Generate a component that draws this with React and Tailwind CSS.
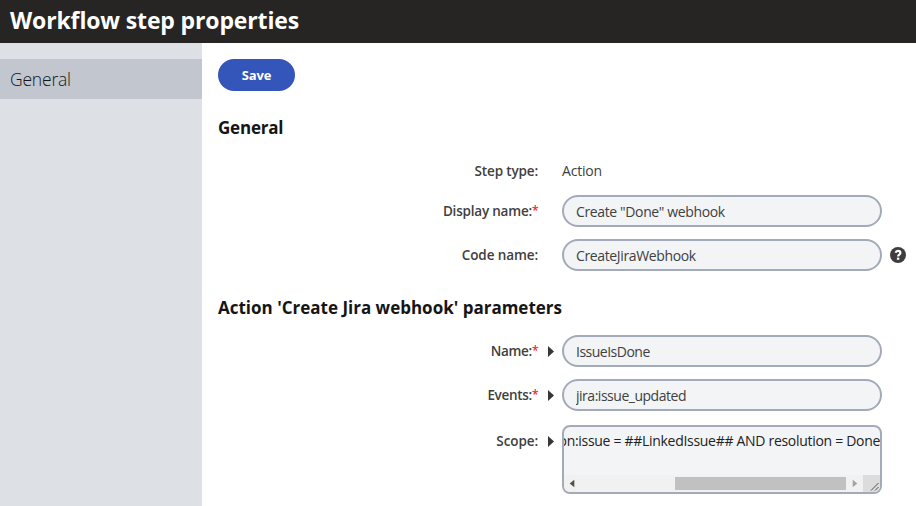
const inputClass =
  'h-8 w-80 rounded-full border-2 border-[#a3abba] bg-[#f2f4f6] pl-3 text-[14px] text-[#404040] outline-none';

function Label({ text, required, arrow, spacing }) {
  return (
    <div className="flex w-[344px] shrink-0 items-center justify-end text-[13.5px] leading-5 font-semibold text-[#404040]">
      <span className={'whitespace-nowrap ' + spacing}>{text}</span>
      {required && <span className="w-[6px] text-[12px] text-[#ff2222]">*</span>}
      <span className="flex w-6 justify-center">
        {arrow && (
          <svg width="6" height="11" viewBox="0 0 6 11" className="ml-px">
            <path d="M0 0L6 5.5L0 11Z" fill="#363636" />
          </svg>
        )}
      </span>
    </div>
  );
}

function Field({ label, value, spacing, labelSpacing, required, arrow, help }) {
  return (
    <div className="flex h-8 items-center">
      <Label text={label} required={required} arrow={arrow} spacing={labelSpacing} />
      <input className={inputClass + ' ' + spacing} defaultValue={value} />
      {help && (
        <svg width="16" height="16" viewBox="0 0 16 16" className="ml-2">
          <circle cx="8" cy="8" r="8" fill="#403e3d" />
          <path d="M5.6 5.7C5.9 4.6 6.8 3.9 8 3.9c1.4 0 2.4.8 2.4 2 0 1.7-2.3 1.6-2.3 3.5" fill="none" stroke="#fff" strokeWidth="2.2" />
          <rect x="6.9" y="10.6" width="2.4" height="2.2" fill="#fff" />
        </svg>
      )}
    </div>
  );
}

export default function App() {
  return (
    <div className="flex h-[506px] w-[916px] flex-col overflow-hidden bg-white font-['Open_Sans',sans-serif]">
      <header className="flex h-[43px] shrink-0 items-center bg-[#262524] pl-[10px]">
        <h1 className="-mt-[3px] text-[23px] leading-8 font-bold tracking-[-0.14px] whitespace-nowrap text-white">Workflow step properties</h1>
      </header>
      <div className="flex flex-1">
        <nav className="w-[202px] shrink-0 bg-[#dde0e5] pt-4">
          <div className="flex h-10 items-center bg-[#c2c6cf] pl-[10px] text-[17.5px] font-light tracking-[-0.2px] text-[#151515]">General</div>
        </nav>
        <main className="flex-1 pt-4 pl-4">
          <button className="block h-8 w-[77px] rounded-full bg-[#3455ba] pt-px text-[13px] font-bold tracking-[-0.2px] text-white">Save</button>
          <h2 className="mt-[25px] text-[17px] leading-6 font-bold tracking-[-0.2px] text-[#151515]">General</h2>
          <div className="mt-[21px] flex h-[20px] items-center">
            <Label text="Step type:" spacing="tracking-[-0.15px]" />
            <span className="-mt-[2px] text-[14px] tracking-[-0.2px] text-[#404040]">Action</span>
          </div>
          <div className="mt-[14px] flex flex-col gap-3">
            <Field label="Display name:" required value={'Create "Done" webhook'} labelSpacing="tracking-[-0.2px]" spacing="tracking-[-0.37px]" />
            <Field label="Code name:" value="CreateJiraWebhook" help labelSpacing="tracking-[-0.1px]" spacing="tracking-[-0.36px]" />
          </div>
          <h2 className="mt-[25px] text-[17px] leading-6 font-bold tracking-[0px] whitespace-nowrap text-[#151515]">Action 'Create Jira webhook' parameters</h2>
          <div className="mt-[15px] flex flex-col gap-3">
            <Field label="Name:" required arrow value="IssueIsDone" labelSpacing="tracking-[-0.3px]" spacing="tracking-[-0.5px]" />
            <Field label="Events:" required arrow value="jira:issue_updated" labelSpacing="tracking-[-0.3px]" spacing="tracking-[-0.48px]" />
          </div>
          <div className="mt-[14px] flex items-start">
            <div className="mt-[6px]">
              <Label text="Scope:" arrow spacing="tracking-[-0.1px]" />
            </div>
            <div className="flex h-[69px] w-80 flex-col overflow-hidden rounded-[8px] border-2 border-[#a3abba] bg-[#f2f4f6]">
              <div className="flex h-12 shrink-0 justify-end overflow-hidden pt-1 text-[14px] leading-[19px] tracking-[-0.3px] whitespace-nowrap text-[#222]">
                <span>on:issue = ##LinkedIssue## AND resolution = Done</span>
              </div>
              <div className="flex h-[17px] items-center bg-[#f1f1f1]">
                <svg width="17" height="17" viewBox="0 0 17 17">
                  <path d="M10.3 4.7V12.3L5.7 8.5Z" fill="#505050" />
                </svg>
                <div className="ml-[94px] h-[13px] w-[171px] bg-[#c1c1c1]" />
                <svg width="17" height="17" viewBox="0 0 17 17">
                  <path d="M6.7 4.7V12.3L11.3 8.5Z" fill="#a3a3a3" />
                </svg>
                <svg width="17" height="17" viewBox="0 0 17 17" className="bg-[#dcdcdc]">
                  <path d="M8 15.5L15.5 8M12 15.5L15.5 12" stroke="#505050" strokeWidth="1" />
                </svg>
              </div>
            </div>
          </div>
        </main>
      </div>
    </div>
  );
}
